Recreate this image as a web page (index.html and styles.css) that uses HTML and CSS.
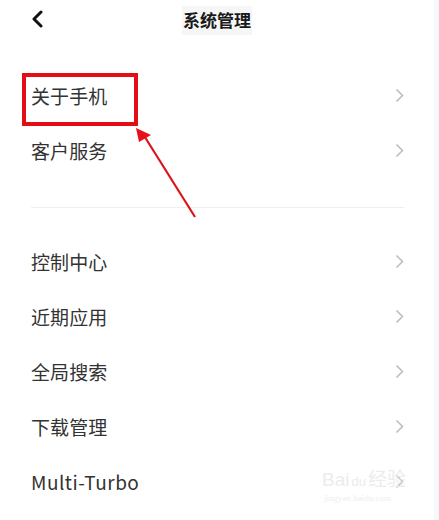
FILE: index.html
```html
<!DOCTYPE html>
<html lang="zh-CN">
<head>
<meta charset="utf-8">
<title>系统管理</title>
<link rel="stylesheet" href="styles.css">
</head>
<body>
<div class="page">
  <header class="topbar">
    <svg class="back" width="14" height="18" viewBox="0 0 14 18"><path d="M10 2 L3 9 L10 16" fill="none" stroke="#111" stroke-width="3" stroke-linecap="round" stroke-linejoin="round"/></svg>
    <h1 class="title">系统管理</h1>
  </header>

  <section class="group first">
    <div class="row"><span class="label">关于手机</span><svg class="chev" width="9" height="15" viewBox="0 0 9 15"><path d="M1.5 1.5 L7.5 7.5 L1.5 13.5" fill="none" stroke="#bdbdbd" stroke-width="1.6"/></svg></div>
    <div class="row"><span class="label">客户服务</span><svg class="chev" width="9" height="15" viewBox="0 0 9 15"><path d="M1.5 1.5 L7.5 7.5 L1.5 13.5" fill="none" stroke="#bdbdbd" stroke-width="1.6"/></svg></div>
  </section>

  <div class="divider"></div>

  <section class="group second">
    <div class="row"><span class="label">控制中心</span><svg class="chev" width="9" height="15" viewBox="0 0 9 15"><path d="M1.5 1.5 L7.5 7.5 L1.5 13.5" fill="none" stroke="#bdbdbd" stroke-width="1.6"/></svg></div>
    <div class="row"><span class="label">近期应用</span><svg class="chev" width="9" height="15" viewBox="0 0 9 15"><path d="M1.5 1.5 L7.5 7.5 L1.5 13.5" fill="none" stroke="#bdbdbd" stroke-width="1.6"/></svg></div>
    <div class="row"><span class="label">全局搜索</span><svg class="chev" width="9" height="15" viewBox="0 0 9 15"><path d="M1.5 1.5 L7.5 7.5 L1.5 13.5" fill="none" stroke="#bdbdbd" stroke-width="1.6"/></svg></div>
    <div class="row"><span class="label">下载管理</span><svg class="chev" width="9" height="15" viewBox="0 0 9 15"><path d="M1.5 1.5 L7.5 7.5 L1.5 13.5" fill="none" stroke="#bdbdbd" stroke-width="1.6"/></svg></div>
    <div class="row"><span class="label latin">Multi-Turbo</span><svg class="chev" width="9" height="15" viewBox="0 0 9 15"><path d="M1.5 1.5 L7.5 7.5 L1.5 13.5" fill="none" stroke="#bdbdbd" stroke-width="1.6"/></svg></div>
  </section>

  <div class="highlight"></div>
  <svg class="arrow" width="439" height="520" viewBox="0 0 439 520">
    <line x1="195" y1="217" x2="143" y2="134" stroke="#d9151b" stroke-width="2.2"/>
    <polygon points="136,128 151,135 139,142" fill="#e8101a"/>
  </svg>

  <div class="watermark">
    <div class="wm-logo">Bai<span class="wm-du">du</span>经验</div>
    <div class="wm-url">jingyan.baidu.com</div>
  </div>
</div>
</body>
</html>
```

FILE: styles.css
```css
html, body {
  margin: 0;
  padding: 0;
  background: #ffffff;
}

.page {
  position: relative;
  width: 434px;
  height: 520px;
  border-right: 5px solid #f6f8fb;
  overflow: hidden;
  font-family: "Noto Sans CJK SC", "Noto Sans", sans-serif;
  color: #333333;
}

.topbar {
  position: relative;
  height: 44px;
  display: flex;
  align-items: center;
  justify-content: center;
}

.back {
  position: absolute;
  left: 31px;
  top: 10px;
}

.title {
  margin: 0;
  font-size: 17px;
  font-weight: 700;
  color: #1a1a1a;
  line-height: 22px;
  padding: 3px 1px 4px;
  background: #f6f6f6;
  margin-top: -4px;
}

.group.first {
  padding-top: 24px;
}

.group.second {
  margin-top: 26px;
}

.row {
  height: 55px;
  display: flex;
  align-items: center;
  justify-content: space-between;
  padding: 0 30px 0 31px;
}

.label {
  font-size: 19px;
  line-height: 24px;
  color: #333333;
  letter-spacing: 0.1px;
}

.label.latin {
  letter-spacing: 0.5px;
}

.chev {
  flex: none;
}

.divider {
  height: 1px;
  background: #efefef;
  margin: 29px 30px 0 31px;
}

.highlight {
  position: absolute;
  left: 22px;
  top: 73px;
  width: 108px;
  height: 45px;
  border: 4px solid #e50d14;
}

.arrow {
  position: absolute;
  left: 0;
  top: 0;
  pointer-events: none;
}

.watermark {
  position: absolute;
  left: 322px;
  top: 470px;
}

.wm-logo {
  font-family: "Liberation Sans", sans-serif;
  font-size: 19px;
  line-height: 20px;
  color: #ececec;
}

.wm-du {
  font-size: 13px;
  padding: 0 2px;
}

.wm-url {
  font-family: "Liberation Serif", serif;
  font-size: 9px;
  line-height: 12px;
  color: #eeeeee;
  padding-left: 2px;
}
```
